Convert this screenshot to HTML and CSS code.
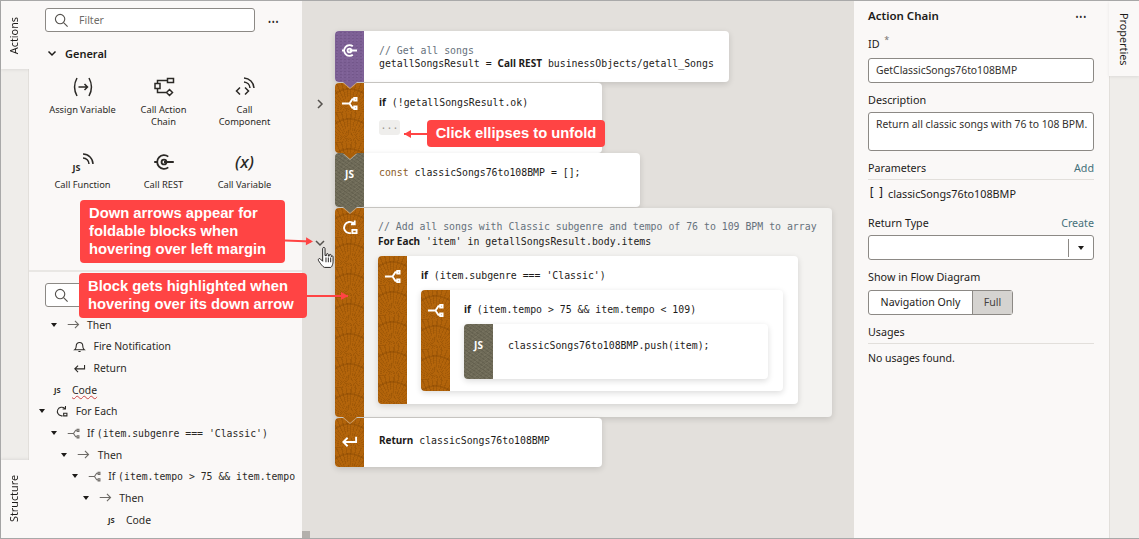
FILE: index.html
```html
<!DOCTYPE html>
<html lang="en">
<head>
<meta charset="utf-8">
<title>Action Chain</title>
<link rel="stylesheet" href="styles.css">
</head>
<body>
<svg class="defs" width="0" height="0" aria-hidden="true">
  <symbol id="i-rest" viewBox="0 0 18 18"><path d="M12.500 4.600A5.600 5.600 0 1 0 12.500 13.400M1 9H3.200M9 9H17"/><circle cx="9" cy="9" r="2"/></symbol>
  <symbol id="i-split" viewBox="0 0 18 18"><path d="M1 9H9L12 4.500H14M9 9L12 13.500H14"/><path d="M14 3H16.500V6H14ZM14 12H16.500V15H14Z"/></symbol>
  <symbol id="i-loop" viewBox="0 0 18 18"><path d="M13.500 4.800A6 6 0 1 0 8.500 15H10.500M14.500 1.500V5.500H10.500"/><path d="M12 11.500H16.500V15H12Z"/></symbol>
  <symbol id="i-return" viewBox="0 0 18 18"><path d="M16 4V9.500H2.500M7 5L2.500 9.500L7 14"/></symbol>
  <symbol id="i-then" viewBox="0 0 18 18"><path d="M1 9H16M11 4L16 9L11 14"/></symbol>
  <symbol id="i-bell" viewBox="0 0 18 18"><path d="M2.500 13.500C4.500 12 4.500 10 4.500 8A4.500 4.500 0 0 1 13.500 8C13.500 10 13.500 12 15.500 13.500ZM7.500 16H10.500"/></symbol>
  <symbol id="i-assign" viewBox="0 0 22 22"><path d="M5 2C2 7.500 2 14.500 5 20M17 2C20 7.500 20 14.500 17 20M6.500 11H15.500M12.500 8L15.500 11L12.500 14"/></symbol>
  <symbol id="i-chain" viewBox="0 0 22 22"><path d="M14.500 2.500H20.500V6.500H14.500ZM2 7.500H7V12.500H2ZM4.500 7.500V4.500H14.500M4.500 12.500V16.500H13.500M16.500 13.500L19.500 16.500L16.500 19.500L13.500 16.500Z"/></symbol>
  <symbol id="i-comp" viewBox="0 0 22 22"><path d="M6 11.500L2.500 15L6 18.500M11 11.500L14.500 15L11 18.500M10 6A6.500 6.500 0 0 1 16 12M10 2A10.500 10.500 0 0 1 20 12"/></symbol>
  <symbol id="i-wifi" viewBox="0 0 12 12"><path d="M1 5A6 6 0 0 1 7 11M1 1A10 10 0 0 1 11 11"/></symbol>
  <symbol id="i-search" viewBox="0 0 16 16"><circle cx="6.500" cy="6.500" r="5"/><path d="M10.200 10.200L14.500 14.500"/></symbol>
</svg>

<div class="app">
  <nav class="rail rail-left">
    <div class="tab tab-actions"><span class="tab-label tab-label-up">Actions</span></div>
    <div class="rail-gap"></div>
    <div class="tab tab-structure"><span class="tab-label tab-label-up">Structure</span></div>
  </nav>

  <aside class="panel-left">
    <section class="palette">
      <div class="search-row">
        <div class="search"><svg class="search-icon"><use href="#i-search"/></svg><span class="placeholder">Filter</span></div>
        <span class="dots">•••</span>
      </div>
      <div class="group-head"><svg class="chev" viewBox="0 0 10 10"><path d="M1.500 3.500L5 7L8.500 3.500"/></svg><span>General</span></div>
      <div class="palette-grid">
        <div class="tool"><svg class="tool-icon"><use href="#i-assign"/></svg><span>Assign Variable</span></div>
        <div class="tool"><svg class="tool-icon"><use href="#i-chain"/></svg><span>Call Action<br>Chain</span></div>
        <div class="tool"><svg class="tool-icon"><use href="#i-comp"/></svg><span>Call<br>Component</span></div>
        <div class="tool"><div class="js-wifi"><span class="js-small">JS</span><svg class="wifi"><use href="#i-wifi"/></svg></div><span>Call Function</span></div>
        <div class="tool"><svg class="tool-icon"><use href="#i-rest"/></svg><span>Call REST</span></div>
        <div class="tool"><div class="x-icon">(x)</div><span>Call Variable</span></div>
      </div>
    </section>
    <section class="structure">
      <div class="search search-structure"><svg class="search-icon"><use href="#i-search"/></svg></div>
      <ul class="tree">
        <li class="row l1"><i class="caret"></i><svg class="t-icon grey"><use href="#i-then"/></svg><span>Then</span></li>
        <li class="row l2b"><svg class="t-icon"><use href="#i-bell"/></svg><span>Fire Notification</span></li>
        <li class="row l2b"><svg class="t-icon"><use href="#i-return"/></svg><span>Return</span></li>
        <li class="row l1b"><span class="t-js">JS</span><span class="squiggle">Code</span></li>
        <li class="row l0"><i class="caret"></i><svg class="t-icon"><use href="#i-loop"/></svg><span>For Each</span></li>
        <li class="row l1"><i class="caret"></i><svg class="t-icon grey"><use href="#i-split"/></svg><span>If <code>(item.subgenre === 'Classic')</code></span></li>
        <li class="row l2"><i class="caret"></i><svg class="t-icon grey"><use href="#i-then"/></svg><span>Then</span></li>
        <li class="row l3"><i class="caret"></i><svg class="t-icon grey"><use href="#i-split"/></svg><span>If <code>(item.tempo &gt; 75 &amp;&amp; item.tempo &lt; 109)</code></span></li>
        <li class="row l4"><i class="caret"></i><svg class="t-icon grey"><use href="#i-then"/></svg><span>Then</span></li>
        <li class="row l5"><span class="t-js">JS</span><span>Code</span></li>
      </ul>
    </section>
  </aside>

  <main class="canvas">
    <div class="block w1">
      <div class="side purple notch-purple"><svg class="side-icon"><use href="#i-rest"/></svg></div>
      <div class="body b1"><div class="cm">// Get all songs</div><div>getallSongsResult = <b>Call REST</b> businessObjects/getall_Songs</div></div>
    </div>
    <div class="block w2 gap1">
      <div class="side orange notch-orange"><svg class="side-icon"><use href="#i-split"/></svg></div>
      <div class="body b2"><div><b>if</b> (!getallSongsResult.ok)</div><div class="fold">...</div></div>
    </div>
    <div class="block w3">
      <div class="side stone notch-stone"><span class="js-side">JS</span></div>
      <div class="body b2"><div><span class="kw">const</span> classicSongs76to108BMP = [];</div></div>
    </div>
    <div class="block w4 gap1 soft">
      <div class="side orange notch-orange"><svg class="side-icon"><use href="#i-loop"/></svg></div>
      <div class="body b4">
        <div class="cm">// Add all songs with Classic subgenre and tempo of 76 to 109 BPM to array</div>
        <div><b>For Each</b> 'item' in getallSongsResult.body.items</div>
        <div class="block inner i1">
          <div class="side orange"><svg class="side-icon"><use href="#i-split"/></svg></div>
          <div class="body bi">
            <div><b>if</b> (item.subgenre === 'Classic')</div>
            <div class="block inner i2">
              <div class="side orange"><svg class="side-icon"><use href="#i-split"/></svg></div>
              <div class="body bi">
                <div><b>if</b> (item.tempo &gt; 75 &amp;&amp; item.tempo &lt; 109)</div>
                <div class="block inner i3">
                  <div class="side stone"><span class="js-side">JS</span></div>
                  <div class="body bj">classicSongs76to108BMP.push(item);</div>
                </div>
              </div>
            </div>
          </div>
        </div>
      </div>
    </div>
    <div class="block w5 gap1">
      <div class="side orange"><svg class="side-icon"><use href="#i-return"/></svg></div>
      <div class="body b5"><b>Return</b> classicSongs76to108BMP</div>
    </div>

    <svg class="fold-chev fc-right" viewBox="0 0 10 10"><path d="M3 1L7 5L3 9"/></svg>
    <svg class="fold-chev fc-down" viewBox="0 0 10 10"><path d="M1 3L5 7L9 3"/></svg>
    <svg class="hand" viewBox="0 0 18 24"><path d="M6 2.500C6 1 8.500 1 8.500 2.500V10H10V8.800C10 7.600 12 7.600 12 8.800V10.500H13V9.500C13 8.400 15 8.400 15 9.500V11H15.500C15.500 10 17 10 17 11.500V16C17 19 15.500 22.500 14.500 22.500H8C6.500 22.500 2.500 17 1.500 15C1 13.500 2.500 12.500 3.500 13.500L6 16Z"/><path class="hand-line" d="M9.500 12V17M12 12V17M14.500 12V17"/></svg>
    <div class="scroll-thumb"></div>
  </main>

  <aside class="panel-right">
    <div class="title-row"><h2>Action Chain</h2><span class="dots">•••</span></div>
    <label class="lbl lbl-id">ID <sup>*</sup></label>
    <div class="input">GetClassicSongs76to108BMP</div>
    <label class="lbl lbl-desc">Description</label>
    <div class="input area">Return all classic songs with 76 to 108 BPM.</div>
    <div class="split-row params"><span>Parameters</span><a>Add</a></div>
    <div class="param"><span class="brackets">[ ]</span><span>classicSongs76to108BMP</span></div>
    <div class="split-row plain ret"><span>Return Type</span><a>Create</a></div>
    <div class="input select"><span class="sep"></span><i class="caret"></i></div>
    <label class="lbl lbl-flow">Show in Flow Diagram</label>
    <div class="segmented"><span class="seg">Navigation Only</span><span class="seg on">Full</span></div>
    <div class="split-row usages"><span>Usages</span></div>
    <p class="none">No usages found.</p>
  </aside>

  <nav class="rail rail-right">
    <div class="tab tab-props"><span class="tab-label">Properties</span></div>
  </nav>

  <div class="note n1">Down arrows appear for foldable blocks when hovering over left margin</div>
  <div class="note n2">Block gets highlighted when hovering over its down arrow</div>
  <div class="note n3">Click ellipses to unfold</div>
  <div class="arrow a1"></div>
  <div class="arrow a2"></div>
  <div class="arrow a3"></div>
</div>
</body>
</html>
```
FILE: styles.css
```css
* { box-sizing: border-box; }
html, body { margin: 0; height: 100%; }
body { font-family: "Noto Sans", sans-serif; font-size: 10.500px; color: #1d1b19; background: #fff; overflow: hidden; }
.defs { position: absolute; }
svg { fill: none; stroke: currentColor; stroke-width: 1.500; display: block; }
ul { list-style: none; margin: 0; padding: 0; }
h2, p { margin: 0; }

.app { position: relative; display: flex; width: 1139px; height: 539px; border: 1px solid #a9a9a9; border-width: 1px 0 1px 1px; }

/* rails */
.rail { flex: none; background: #efedea; display: flex; flex-direction: column; }
.rail-left { width: 28px; border-right: 1px solid #e2dfdb; }
.rail-right { width: 30px; border-left: 1px solid #e2dfdb; }
.tab { background: #faf8f7; display: flex; justify-content: center; align-items: flex-start; }
.tab-actions { height: 68px; margin-right: -1px; padding: 16px 2px 0 0; box-shadow: 0 1px 3px rgba(0,0,0,.08); }
.rail-gap { flex: 1; }
.tab-structure { height: 78px; margin-right: -1px; padding: 15px 2px 0 0; box-shadow: 0 -1px 3px rgba(0,0,0,.08); }
.tab-props { height: 75px; margin-left: -1px; padding-top: 12px; box-shadow: 0 1px 3px rgba(0,0,0,.08); }
.tab-label { writing-mode: vertical-rl; font-size: 10.800px; line-height: 14px; }
.tab-label-up { transform: rotate(180deg); }

/* left panel */
.panel-left { width: 273px; flex: none; background: #faf8f7; display: flex; flex-direction: column; }
.palette { height: 271px; padding: 7px 0 0 16px; border-bottom: 2px solid #e9e7e4; flex: none; }
.search-row { display: flex; align-items: center; }
.search { width: 210px; height: 24px; background: #fff; border: 1px solid #8c8985; border-radius: 3px; display: flex; align-items: center; padding-left: 8px; }
.search-icon { width: 15px; height: 15px; color: #55524e; stroke-width: 1.200; }
.placeholder { margin-left: 10px; font-size: 10.500px; color: #6f6c68; }
.dots { font-size: 8px; letter-spacing: .8px; margin: 3px 0 0 13px; color: #2b2926; line-height: 10px; }
.group-head { display: flex; align-items: center; gap: 8px; font-weight: 600; font-size: 11px; margin-top: 13px; height: 16px; padding-left: 2px; }
.chev { width: 10px; height: 10px; }
.palette-grid { display: grid; grid-template-columns: repeat(3, 81px); grid-auto-rows: 75px; margin: 15px 0 0 -3px; }
.tool { display: flex; flex-direction: column; align-items: center; text-align: center; line-height: 12px; font-size: 9.300px; color: #2b2926; }
.tool > span { display: block; white-space: nowrap; margin-top: 6px; }
.tool-icon { width: 22px; height: 22px; }
.js-wifi { position: relative; width: 22px; height: 22px; }
.js-small { position: absolute; left: 1px; bottom: 0; font: 700 9px/10px "Noto Sans", sans-serif; }
.wifi { position: absolute; right: 0; top: 2px; width: 12px; height: 12px; }
.x-icon { height: 22px; font: italic 500 17px/22px "Noto Sans", sans-serif; }

.structure { flex: 1; min-height: 0; padding: 11px 7px 0 16px; }
.search-structure { height: 24px; }
.tree { margin: 7px 0 0 -16px; overflow: hidden; }
.row { height: 21.650px; display: flex; align-items: center; white-space: nowrap; font-size: 10.400px; color: #2b2926; }
.row code { font: 9.800px "DejaVu Sans Mono", monospace; }
.caret { display: block; width: 0; height: 0; border: 3.500px solid transparent; border-top: 4px solid #1d1b19; border-bottom: 0; flex: none; }
.row .caret { margin-right: 10px; }
.t-icon { width: 13px; height: 13px; margin-right: 7.500px; flex: none; stroke-width: 1.500; }
.grey { color: #6d6a66; }
.l0 { padding-left: 10.200px; }
.l1 { padding-left: 21.500px; }
.l2 { padding-left: 32.200px; }
.l3 { padding-left: 42.800px; }
.l4 { padding-left: 53.800px; }
.l5 { padding-left: 79px; }
.l2b { padding-left: 44px; }
.l1b { padding-left: 25px; }
.t-js { font-size: 7.500px; font-weight: 700; margin-right: 9px; width: 9px; }
.squiggle { text-decoration: underline wavy #c44; text-decoration-thickness: 1px; }

/* canvas */
.canvas { position: relative; width: 552px; flex: none; background: #e3e0dc; padding: 30px 0 0 33px; font: 9.850px/13.500px "DejaVu Sans Mono", monospace; color: #1d1b19; }
.block { display: flex; background: #fff; border-radius: 4px; box-shadow: 0 2px 6px rgba(0,0,0,.14); }
.gap1 { margin-top: 1px; }
.w1 { width: 394px; height: 51px; }
.w2 { width: 267px; height: 70px; }
.w3 { width: 305px; height: 54px; }
.w4 { width: 497px; height: 209px; }
.w5 { width: 267px; height: 49px; }
.soft { background: #f4f3f1; }
.side { position: relative; width: 29px; flex: none; border-radius: 4px 0 0 4px; color: #fff; display: flex; justify-content: center; }
.body { flex: 1; min-width: 0; white-space: nowrap; }
.body b { font-family: "Noto Sans", sans-serif; font-weight: 700; font-size: 10px; }
.orange {
  background-color: #b4650b;
  background-image:
    repeating-conic-gradient(from -70deg at 50% 100%, rgba(120,62,0,.28) 0 2.500deg, transparent 2.500deg 9deg),
    repeating-conic-gradient(from -65deg at 50% 100%, rgba(120,62,0,.16) 0 2.500deg, transparent 2.500deg 9deg),
    radial-gradient(circle at 50% 100%, transparent 69%, rgba(120,62,0,.3) 70% 74%, transparent 75%);
  background-size: 29px 30px, 29px 30px, 29px 30px;
  background-position: 0 0, 14.500px 15px, 0 0;
}
.purple { background-color: #7d6095; background-image: radial-gradient(rgba(60,35,80,.16) 1px, transparent 1.200px), radial-gradient(rgba(160,130,185,.18) 1px, transparent 1.200px); background-size: 4px 3px, 5px 4px; }
.stone { background-color: #6f6b58; background-image: repeating-linear-gradient(35deg, rgba(40,38,28,.14) 0 1px, transparent 1px 3px), repeating-linear-gradient(-35deg, rgba(170,165,145,.12) 0 1px, transparent 1px 4px); }
.notch-purple::after, .notch-orange::after, .notch-stone::after { content: ""; position: absolute; z-index: 2; left: 8px; bottom: -6px; width: 0; height: 0; border: 7px solid transparent; border-top: 6px solid; border-bottom: 0; filter: drop-shadow(0 1px 0 rgba(255,255,255,.45)); }
.notch-purple::after { border-top-color: #7d6095; }
.notch-orange::after { border-top-color: #a95e08; }
.notch-stone::after { border-top-color: #6f6b58; }
.side-icon { width: 17px; height: 17px; stroke-width: 2; margin-top: 11px; }
.w2 > .side > .side-icon, .i1 > .side > .side-icon, .i2 > .side > .side-icon { margin-top: 12px; }
.w5 > .side > .side-icon { margin-top: 15px; }
.js-side { font: 700 10px/12px "Noto Sans", sans-serif; margin-top: 15px; }
.cm { color: #66717c; }
.kw { color: #8a5a1f; }
.b1 { padding: 12.500px 0 0 15px; }
.b2 { padding: 13px 0 0 15px; }
.b4 { padding: 12px 0 0 14px; line-height: 14px; }
.b5 { padding: 16px 0 0 15px; }
.fold { width: 21px; height: 15px; margin-top: 10px; background: #efeeec; border-radius: 3px; text-align: center; line-height: 12px; color: #9b9792; }
.inner { margin-top: 7px; }
.i1 { width: 420px; height: 148px; }
.i2 { width: 362px; height: 101px; }
.i3 { width: 304px; height: 55px; }
.bi { padding: 12px 0 0 14px; }
.bj { padding: 15px 0 0 15px; }
.fold-chev { position: absolute; width: 10px; height: 10px; color: #55524e; }
.fc-right { left: 13px; top: 98px; }
.fc-down { left: 13px; top: 237px; }
.hand { position: absolute; left: 15px; top: 245px; width: 17px; height: 23px; fill: #fff; stroke: #1d1b19; stroke-width: 1; }
.hand-line { fill: none; }
.scroll-thumb { position: absolute; left: 0; bottom: 0; width: 8px; height: 7px; background: #b3b0ac; }

/* right panel */
.panel-right { width: 255px; flex: none; background: #faf8f7; padding: 6px 15px 0 14px; font-size: 10.800px; }
.title-row { display: flex; justify-content: space-between; align-items: center; height: 16px; }
.title-row .dots { margin: 3px 7px 0 0; }
h2 { font-size: 11.500px; font-weight: 600; }
.lbl { display: block; font-size: 10.800px; line-height: 15px; }
.lbl sup { font-size: 9px; color: #77736e; line-height: 0; margin-left: 2px; }
.lbl-id { margin-top: 13px; }
.lbl-desc { margin-top: 9px; }
.lbl-flow { margin-top: 9px; }
.input { height: 25px; margin-top: 7px; border: 1px solid #8c8985; border-radius: 3px; background: #fff; padding: 0 7px; line-height: 22px; font-size: 10.350px; color: #33302d; white-space: nowrap; }
.lbl-desc + .input { margin-top: 5px; height: 39px; }
.split-row { display: flex; justify-content: space-between; align-items: center; font-size: 10.700px; height: 23px; border-bottom: 1px solid #e2dfdb; }
.split-row a { color: #45707a; }
.params { margin-top: 6px; }
.param { display: flex; align-items: center; height: 26px; font-size: 10.800px; gap: 7px; white-space: nowrap; }
.brackets { font: 12px "DejaVu Sans Mono", monospace; letter-spacing: -2.500px; width: 13px; white-space: pre; }
.plain { border-bottom: 0; }
.ret { margin-top: 8px; height: 18px; }
.select { margin-top: 3px; position: relative; display: flex; align-items: center; justify-content: flex-end; padding-right: 9px; gap: 9px; }
.sep { width: 1px; height: 18px; background: #8c8985; }
.segmented { display: flex; width: 145px; height: 25px; margin-top: 6px; border: 1px solid #8c8985; border-radius: 3px; line-height: 22px; text-align: center; font-size: 10.600px; background: #fff; }
.seg { width: 103px; }
.seg.on { flex: 1; background: #d5d3d0; border-left: 1px solid #8c8985; color: #45423f; }
.usages { height: 24px; margin-top: 5px; }
.none { margin-top: 7px; line-height: 15px; font-size: 10.500px; }

/* annotations */
.note { position: absolute; z-index: 5; background: #ff4444; color: #fff; border-radius: 4px; font: 700 14.760px/18px "Liberation Sans", sans-serif; }
.n1 { left: 79px; top: 199px; width: 205px; height: 63px; padding: 4px 9px; }
.n2 { left: 78px; top: 272px; width: 228px; height: 45px; padding: 4px 9px; }
.n3 { left: 426px; top: 119px; width: 178px; height: 27px; padding: 4px 8px; text-align: center; }
.arrow { position: absolute; z-index: 5; height: 2px; background: #ff4444; }
.arrow::after { content: ""; position: absolute; top: -3px; border: 4px solid transparent; }
.a1 { left: 284px; top: 239px; width: 26px; transform: rotate(2deg); }
.a1::after { right: -2px; border-left: 7px solid #ff4444; border-right: 0; }
.a2 { left: 305px; top: 294px; width: 42px; }
.a2::after { right: 0; border-left: 7px solid #ff4444; border-right: 0; }
.a3 { left: 403px; top: 132px; width: 24px; }
.a3::after { left: 0; border-right: 7px solid #ff4444; border-left: 0; }
```
